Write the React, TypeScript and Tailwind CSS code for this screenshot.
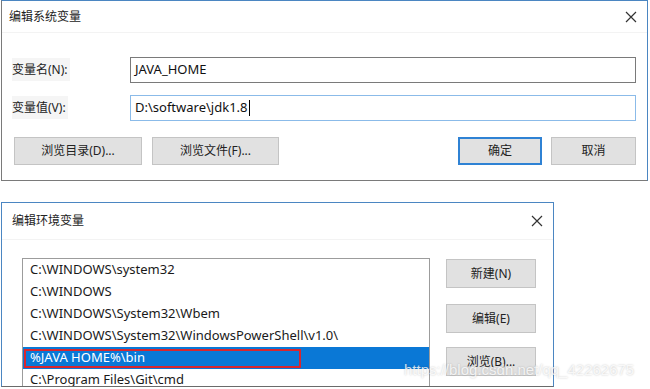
import React from 'react';

const cjk = '"Noto Sans", "Noto Sans CJK SC", sans-serif';

function CloseIcon() {
  return (
    <svg width="12" height="12" viewBox="0 0 12 12" className="text-[#333]">
      <path d="M1 1 L11 11 M11 1 L1 11" stroke="currentColor" strokeWidth="1.2" />
    </svg>
  );
}

function Button({ label, primary, className = '' }: { label: string; primary?: boolean; className?: string }) {
  return (
    <div
      className={`flex items-center justify-center bg-[#e1e1e1] text-[12px] text-[#222] ${
        primary ? 'border-2 border-[#2f82d4]' : 'border border-[#c4c4c4]'
      } ${className}`}
    >
      {label}
    </div>
  );
}

export default function App() {
  const paths = [
    'C:\\WINDOWS\\system32',
    'C:\\WINDOWS',
    'C:\\WINDOWS\\System32\\Wbem',
    'C:\\WINDOWS\\System32\\WindowsPowerShell\\v1.0\\',
    '%JAVA HOME%\\bin',
    'C:\\Program Files\\Git\\cmd',
  ];

  return (
    <div className="relative w-[650px] h-[389px] overflow-hidden bg-white" style={{ fontFamily: cjk }}>
      {/* 编辑系统变量 */}
      <div className="ml-[1px] w-[647px] h-[181px] bg-white border border-[#7a7a7a] border-t-[#4b86c2] border-r-[#4b86c2] flex flex-col">
        <div className="h-[32px] shrink-0 flex items-center justify-between pl-[7px] pr-[10px] border-b border-[#f3f3f3]">
          <span className="text-[12px] text-[#222]">编辑系统变量</span>
          <CloseIcon />
        </div>
        <div className="flex flex-col pl-[6px] pr-[11px] pt-[24px]">
          <div className="flex items-center h-[26px]">
            <span className="w-[122px] pl-[4px] text-[12px] text-[#222]">
              <span className="bg-[#f5f5f5] pr-[2px] py-[3px]">变量名(N):</span>
            </span>
            <div className="flex-1 h-[26px] border border-[#7a7a7a] flex items-center pl-[4px] text-[13px] text-[#111]">
              JAVA_HOME
            </div>
          </div>
          <div className="flex items-center h-[26px] mt-[12px]">
            <span className="w-[122px] pl-[4px] text-[12px] text-[#222]">
              <span className="bg-[#f5f5f5] pr-[2px] py-[3px]">变量值(V):</span>
            </span>
            <div className="flex-1 h-[26px] border border-[#8bbbe9] flex items-center pl-[4px] text-[13px] text-[#111]">
              D:\software\jdk1.8
              <span className="ml-[1px] w-[1px] h-[16px] bg-black" />
            </div>
          </div>
          <div className="flex items-center mt-[16px]">
            <div className="flex gap-[10px] pl-[6px]">
              <Button label="浏览目录(D)..." className="w-[128px] h-[28px]" />
              <Button label="浏览文件(F)..." className="w-[127px] h-[28px]" />
            </div>
            <div className="flex gap-[9px] ml-auto">
              <Button label="确定" primary className="w-[84px] h-[28px]" />
              <Button label="取消" className="w-[85px] h-[28px]" />
            </div>
          </div>
        </div>
      </div>

      {/* 编辑环境变量 */}
      <div className="mt-[21px] ml-[1px] w-[553px] h-[185px] bg-white border border-[#6a6a6a] border-t-[#4b86c2] border-r-[#4b86c2] border-l-[#4b86c2] flex flex-col overflow-hidden">
        <div className="h-[37px] shrink-0 flex items-center justify-between pl-[10px] pr-[10px] border-b border-[#f3f3f3]">
          <span className="text-[12px] text-[#222]">编辑环境变量</span>
          <CloseIcon />
        </div>
        <div className="flex pl-[20px] pt-[18px] gap-[16px]">
          <div className="w-[408px] h-[140px] shrink-0 border border-[#9c9c9c] border-b-0 flex flex-col overflow-hidden">
            {paths.map((p, i) => (
              <div
                key={p}
                className={`h-[22px] shrink-0 flex items-center pl-[7px] text-[13px] ${
                  i === 4 ? 'bg-[#0a78d6] text-white' : 'text-[#1a1a1a]'
                }`}
              >
                {i === 4 ? (
                  <span className="-ml-[6px] w-[277px] h-[19px] border-2 border-[#d9262e] flex items-center pl-[4px]">
                    {p}
                  </span>
                ) : (
                  p
                )}
              </div>
            ))}
          </div>
          <div className="flex flex-col pt-[1px]">
            <Button label="新建(N)" className="w-[90px] h-[29px]" />
            <Button label="编辑(E)" className="w-[90px] h-[29px] mt-[16px]" />
            <Button label="浏览(B)..." className="w-[90px] h-[29px] mt-[14px]" />
          </div>
        </div>
      </div>

      {/* watermark */}
      <div
        className="absolute left-[404px] top-[359px] text-[15px] text-white/80"
        style={{ fontFamily: '"Liberation Sans", Arial, sans-serif', textShadow: '0 0 2px rgba(0,0,0,0.25)' }}
      >
        https://blog.csdn.net/qq_42262675
      </div>
    </div>
  );
}
